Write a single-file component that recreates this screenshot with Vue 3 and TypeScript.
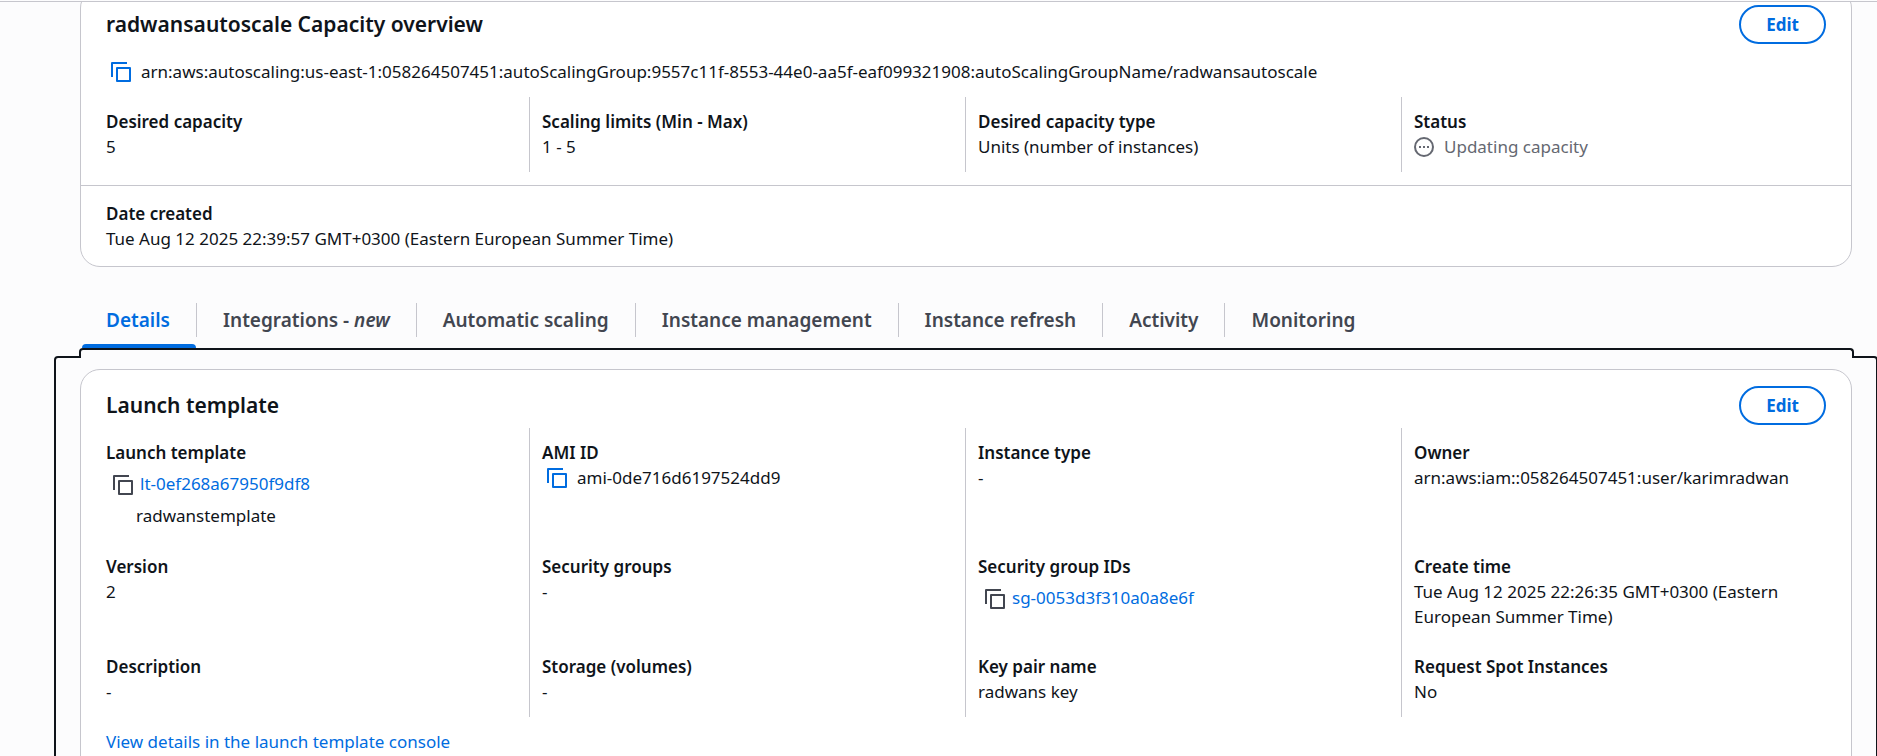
<script setup lang="ts">
import { h, ref } from 'vue'

type Kind = 'text' | 'copy' | 'link' | 'status'

interface Field {
  label: string
  value: string
  kind?: Kind
  note?: string
}

const arn =
  'arn:aws:autoscaling:us-east-1:058264507451:autoScalingGroup:9557c11f-8553-44e0-aa5f-eaf099321908:autoScalingGroupName/radwansautoscale'

const capacity: Field[] = [
  { label: 'Desired capacity', value: '5' },
  { label: 'Scaling limits (Min - Max)', value: '1 - 5' },
  { label: 'Desired capacity type', value: 'Units (number of instances)' },
  { label: 'Status', value: 'Updating capacity', kind: 'status' },
]

const template: Field[] = [
  { label: 'Launch template', value: 'lt-0ef268a67950f9df8', kind: 'link', note: 'radwanstemplate' },
  { label: 'AMI ID', value: 'ami-0de716d6197524dd9', kind: 'copy' },
  { label: 'Instance type', value: '-' },
  { label: 'Owner', value: 'arn:aws:iam::058264507451:user/karimradwan' },
  { label: 'Version', value: '2' },
  { label: 'Security groups', value: '-' },
  { label: 'Security group IDs', value: 'sg-0053d3f310a0a8e6f', kind: 'link' },
  { label: 'Create time', value: 'Tue Aug 12 2025 22:26:35 GMT+0300 (Eastern European Summer Time)' },
  { label: 'Description', value: '-' },
  { label: 'Storage (volumes)', value: '-' },
  { label: 'Key pair name', value: 'radwans key' },
  { label: 'Request Spot Instances', value: 'No' },
]

const tabs = [
  { name: 'Details' },
  { name: 'Integrations - ', tag: 'new' },
  { name: 'Automatic scaling' },
  { name: 'Instance management' },
  { name: 'Instance refresh' },
  { name: 'Activity' },
  { name: 'Monitoring' },
]
const active = ref(0)

const copy = (text: string) => navigator.clipboard?.writeText(text)

const CopyIcon = () =>
  h('svg', { width: 20, height: 20, viewBox: '0 0 20 20', fill: 'none', stroke: 'currentColor', 'stroke-width': 2, 'stroke-linejoin': 'round', 'aria-hidden': 'true' }, [
    h('path', { d: 'M1 15V1h15' }),
    h('rect', { x: 6, y: 6, width: 13, height: 13 }),
  ])
</script>

<template>
  <div class="page">
    <main class="content">
      <section class="card" aria-labelledby="capacity-title">
        <header class="card-head">
          <h2 id="capacity-title">radwansautoscale Capacity overview</h2>
          <button type="button" class="edit">Edit</button>
        </header>
        <div class="arn">
          <button type="button" class="icon-btn" aria-label="Copy ARN" @click="copy(arn)"><CopyIcon /></button>
          <span>{{ arn }}</span>
        </div>
        <dl class="fields">
          <div v-for="f in capacity" :key="f.label" class="field">
            <dt>{{ f.label }}</dt>
            <dd v-if="f.kind === 'status'" class="status">
              <svg width="20" height="20" viewBox="0 0 20 20" aria-hidden="true">
                <circle cx="10" cy="10" r="9" fill="none" stroke="currentColor" stroke-width="2" />
                <path d="M5 9h2v2H5zM9 9h2v2H9zM13 9h2v2h-2z" fill="currentColor" />
              </svg>
              <span>{{ f.value }}</span>
            </dd>
            <dd v-else>{{ f.value }}</dd>
          </div>
        </dl>
        <dl class="created">
          <dt>Date created</dt>
          <dd>Tue Aug 12 2025 22:39:57 GMT+0300 (Eastern European Summer Time)</dd>
        </dl>
      </section>

      <div class="tabs" role="tablist">
        <button
          v-for="(t, i) in tabs"
          :key="t.name"
          type="button"
          role="tab"
          class="tab"
          :class="{ active: active === i }"
          :aria-selected="active === i"
          @click="active = i"
        >
          <span class="tab-label">{{ t.name }}<em v-if="t.tag">{{ t.tag }}</em></span>
        </button>
      </div>

      <div class="panel" role="tabpanel">
        <section class="card" aria-labelledby="template-title">
          <header class="card-head">
            <h2 id="template-title">Launch template</h2>
            <button type="button" class="edit">Edit</button>
          </header>
          <dl class="fields template">
            <div v-for="f in template" :key="f.label" class="field">
              <dt>{{ f.label }}</dt>
              <dd v-if="f.kind === 'link'" class="linked">
                <button type="button" class="icon-btn" :aria-label="'Copy ' + f.label" @click="copy(f.value)"><CopyIcon /></button>
                <a href="#">{{ f.value }}</a>
              </dd>
              <dd v-else-if="f.kind === 'copy'" class="copyable">
                <button type="button" class="icon-btn" :aria-label="'Copy ' + f.label" @click="copy(f.value)"><CopyIcon /></button>
                <span>{{ f.value }}</span>
              </dd>
              <dd v-else>{{ f.value }}</dd>
              <dd v-if="f.note" class="note">{{ f.note }}</dd>
            </div>
          </dl>
          <a href="#" class="more">View details in the launch template console</a>
        </section>
      </div>
    </main>
  </div>
</template>

<style>
body {
  margin: 0;
}
</style>

<style scoped>
.page {
  box-sizing: border-box;
  height: 100vh;
  overflow: hidden;
  padding-top: 1px;
  background: #fcfcfd;
  color: #0f141a;
  font: 400 17px/25px "Noto Sans", "Open Sans", sans-serif;
}
.content {
  box-sizing: border-box;
  height: 100%;
  overflow: hidden;
  padding: 0 25px 0 80px;
  border-top: 1px solid #c6c6cd;
}
.card {
  border: 1px solid #c6c6cd;
  border-radius: 20px;
  background: #fff;
}
.content > .card {
  margin-top: -14px;
}
.card-head {
  display: flex;
  align-items: center;
  justify-content: space-between;
  padding: 16px 25px 0;
}
h2 {
  margin: 0;
  padding-bottom: 2px;
  font-size: 21px;
  font-weight: 600;
  line-height: 30px;
}
button {
  margin: 0;
  font: inherit;
  cursor: pointer;
}
.edit {
  padding: 5px 25px;
  border: 2px solid #006ce0;
  border-radius: 20px;
  background: #fff;
  color: #006ce0;
  font-weight: 700;
}
.icon-btn {
  display: flex;
  padding: 3px 0 2px;
  border: 0;
  background: none;
  color: #006ce0;
}
.arn {
  display: flex;
  align-items: center;
  gap: 10px;
  padding: 15px 25px 0 30px;
}
dl,
dd {
  margin: 0;
}
dt {
  font-weight: 600;
}
.fields {
  display: grid;
  grid-template-columns: repeat(4, 1fr);
  padding: 13px 14px 13px 12px;
}
.template {
  padding-top: 3px;
  padding-bottom: 12px;
}
.field {
  padding: 12px 12px 13px;
  border-left: 1px solid #c6c6cd;
}
.field:nth-child(4n + 1) {
  border-left-color: transparent;
}
.created {
  padding: 15px 25px;
  border-top: 1px solid #c6c6cd;
}
.status,
.copyable,
.linked {
  display: flex;
  align-items: center;
  gap: 10px;
}
.status {
  color: #656871;
}
.status svg {
  margin: 3px 0 2px;
}
.copyable {
  padding-left: 5px;
}
.linked {
  gap: 7px;
  padding-left: 7px;
  line-height: 38px;
}
.linked .icon-btn {
  padding: 5px 0 3px;
  color: #424650;
}
.note {
  padding-left: 30px;
  line-height: 26px;
}
a {
  color: #006ce0;
  text-decoration: none;
}
.more {
  display: block;
  padding: 0 25px 24px;
}
.tabs {
  display: flex;
  margin-top: 25px;
}
.tab {
  position: relative;
  display: flex;
  align-items: center;
  height: 56px;
  padding: 0;
  border: 0;
  background: none;
  color: #424650;
  font-size: 19px;
  font-weight: 600;
  line-height: 34px;
}
.tab-label {
  padding: 0 26px;
  border-right: 1px solid #c6c6cd;
  white-space: pre;
}
.tab:last-child .tab-label {
  border-right: 0;
}
.tab.active {
  color: #006ce0;
}
.tab.active::after {
  content: "";
  position: absolute;
  right: 1px;
  bottom: 0;
  left: 2px;
  height: 4px;
  border-radius: 4px 4px 0 0;
  background: #006ce0;
}
/* Focus ring of the tab panel: a wide frame with a raised, narrower cap. */
.panel {
  position: relative;
  padding-top: 21px;
}
.panel::before,
.panel::after {
  content: "";
  position: absolute;
  box-sizing: border-box;
  border: 2px solid #0f141a;
}
.panel::before {
  top: 8px;
  right: -26px;
  bottom: -8px;
  left: -26px;
  border-radius: 4px;
}
.panel::after {
  top: 0;
  right: -2px;
  left: -1px;
  height: 10px;
  border-bottom: 0;
  border-radius: 4px 4px 0 0;
  background: #fcfcfd;
}
.panel .card {
  position: relative;
  z-index: 1;
}
</style>
